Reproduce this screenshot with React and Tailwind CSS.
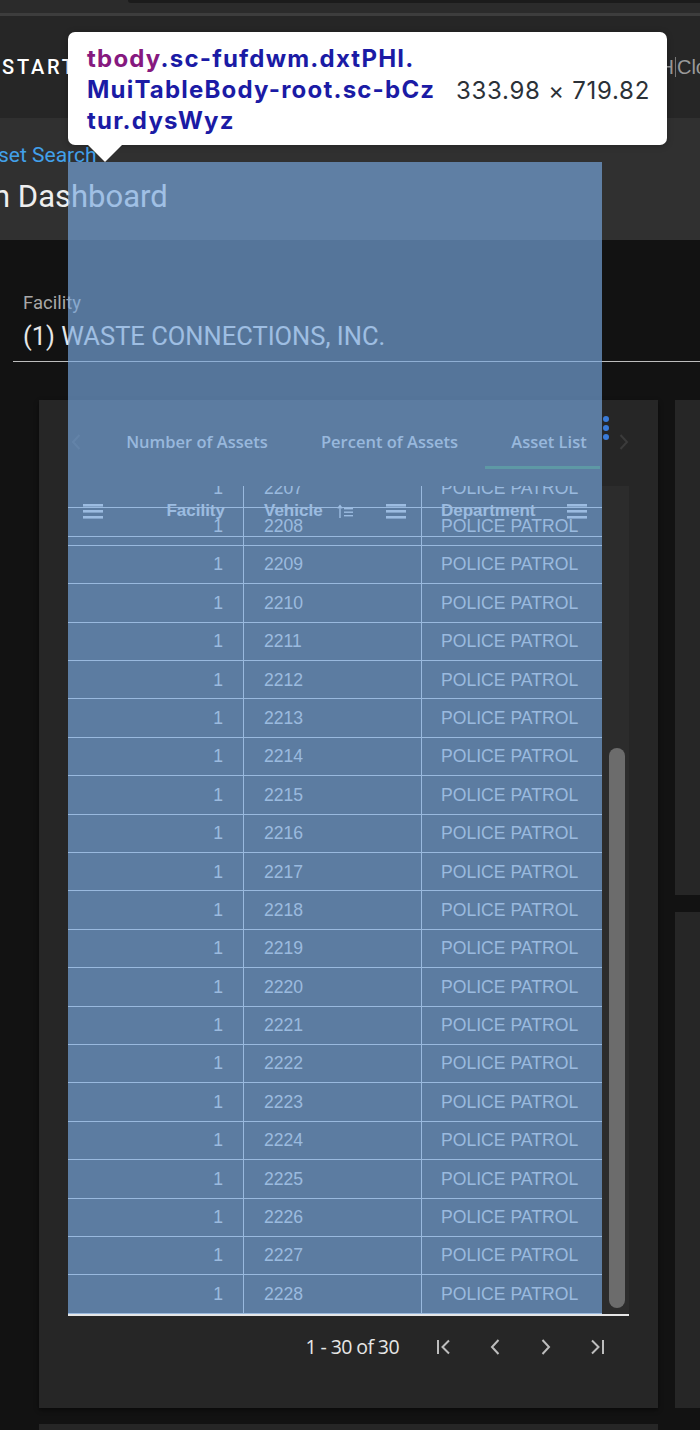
import React from "react";

const MenuIcon = ({ className = "" }) => (
  <svg width="20" height="15" viewBox="0 0 20 15" className={className}>
    <rect x="0" y="0" width="20" height="2.6" fill="#e0e0e0" />
    <rect x="0" y="6" width="20" height="2.6" fill="#e0e0e0" />
    <rect x="0" y="12" width="20" height="2.6" fill="#e0e0e0" />
  </svg>
);

const SortIcon = () => (
  <svg width="17" height="15" viewBox="0 0 17 15">
    <path d="M3 14V2M0.8 4.4L3 1.6L5.2 4.4" stroke="#e0e0e0" strokeWidth="1.4" fill="none" />
    <rect x="7" y="4" width="9" height="1.4" fill="#e0e0e0" />
    <rect x="7" y="7.5" width="9" height="1.4" fill="#e0e0e0" />
    <rect x="7" y="11" width="9" height="1.4" fill="#e0e0e0" />
  </svg>
);

const Chevron = ({ dir = "left", color = "#bdbdbd", w = 12, h = 18, sw = 2 }) => (
  <svg width={w} height={h} viewBox="0 0 12 18">
    {dir === "left" ? (
      <path d="M9.5 2L3 9l6.5 7" stroke={color} strokeWidth={sw} fill="none" />
    ) : (
      <path d="M2.5 2L9 9l-6.5 7" stroke={color} strokeWidth={sw} fill="none" />
    )}
  </svg>
);

const FirstPage = () => (
  <svg width="18" height="18" viewBox="0 0 18 18">
    <path d="M3 2v14" stroke="#bdbdbd" strokeWidth="2" />
    <path d="M14 2.5L7.5 9l6.5 6.5" stroke="#bdbdbd" strokeWidth="2" fill="none" />
  </svg>
);

const LastPage = () => (
  <svg width="18" height="18" viewBox="0 0 18 18">
    <path d="M15 2v14" stroke="#bdbdbd" strokeWidth="2" />
    <path d="M4 2.5L10.5 9 4 15.5" stroke="#bdbdbd" strokeWidth="2" fill="none" />
  </svg>
);

const rows = Array.from({ length: 30 }, (_, i) => 2199 + i);

export default function App() {
  return (
    <div className="relative w-[700px] h-[1430px] overflow-hidden bg-[#121212] font-['Roboto',sans-serif]">
      {/* top browser strip */}
      <div className="h-[13px] bg-[#2b2b2b]">
        <div className="ml-[128px] h-[3px] bg-[#1b1b1b] rounded-bl-[10px]" />
      </div>
      <div className="h-[3px] bg-[#3d3d3d]" />

      {/* app bar */}
      <div className="h-[102px] bg-[#262626] flex items-center justify-between">
        <div className="text-[20px] tracking-[0.14em] text-white font-medium pl-[2px]">START</div>
        <div className="flex items-center text-[20px] text-[#9a9a9a] font-['Liberation_Sans',sans-serif] -mr-[7px]">
          <span>H</span>
          <span className="w-[1px] h-[20px] bg-[#777] mx-[1px]" />
          <span>Clo</span>
        </div>
      </div>

      {/* header band */}
      <div className="h-[122px] bg-[#303030] pt-[23px]">
        <div className="text-[21px] leading-[28px] text-[#42a0ea] -ml-[2px]">set Search</div>
        <div className="text-[31px] leading-[40px] text-[#eeeeee] mt-[8px] -ml-[7px]">n Dashboard</div>
      </div>

      {/* main */}
      <div className="pt-[52px]">
        <div className="ml-[13px] border-b border-[#bdbdbd] pb-[10px]">
          <div className="pl-[10px] text-[18.5px] leading-[22px] text-[#a8a8a8]">Facility</div>
          <div className="pl-[10px] mt-[7px] text-[25.5px] leading-[30px] text-[#e6e6e6]">(1) WASTE CONNECTIONS, INC.</div>
        </div>

        <div className="mt-[38px] flex gap-[17px]">
          {/* main card */}
          <div className="ml-[39px] w-[619px] h-[1008px] shrink-0 bg-[#262626] shadow-[0_2px_4px_rgba(0,0,0,0.5)]">
            {/* tabs */}
            <div className="ml-[29px] h-[70px] flex">
              <div className="w-[32px] flex items-center pt-[14px] pl-[2px]">
                <Chevron dir="left" color="#3d3d3d" w={12} h={20} />
              </div>
              <div className="w-[500px] overflow-hidden flex font-['Open_Sans',sans-serif] font-semibold text-[16.5px] text-[#d6d6d6]">
                <div className="w-[194px] shrink-0 flex items-center justify-center pt-[14px]">Number of Assets</div>
                <div className="w-[191px] shrink-0 flex items-center justify-center pt-[14px]">Percent of Assets</div>
                <div className="relative w-[128px] shrink-0 flex items-center justify-center pt-[14px]">
                  Asset List
                  <div className="absolute left-0 right-0 bottom-[1px] h-[3px] bg-[#2e7d32]" />
                </div>
              </div>
              <div className="w-[10px] flex flex-col items-center pt-[16px] gap-[3px] pl-[2px]">
                <div className="w-[6px] h-[6px] rounded-full bg-[#3a7bd8]" />
                <div className="w-[6px] h-[6px] rounded-full bg-[#3a7bd8]" />
                <div className="w-[6px] h-[6px] rounded-full bg-[#3a7bd8]" />
              </div>
              <div className="w-[24px] flex items-center pt-[14px] pl-[8px]">
                <Chevron dir="right" color="#3b3b3b" w={12} h={20} />
              </div>
            </div>

            {/* table */}
            <div className="mt-[16px] ml-[29px] w-[561px] h-[828px] flex relative overflow-hidden font-['Liberation_Sans',Arial,sans-serif]">
              <div className="w-[534px] h-full overflow-hidden relative">
                <div className="-mt-[324px]">
                  {rows.map((v) => (
                    <div key={v} className="h-[38.4px] grid grid-cols-[176px_178px_180px] border-b border-[#d8d8d8] text-[17.6px] text-[#dcdcdc]">
                      <div className="border-r border-[#d8d8d8] flex items-center justify-end pr-[20px]">1</div>
                      <div className="border-r border-[#d8d8d8] flex items-center pl-[20px]">{v}</div>
                      <div className="flex items-center pl-[19px]">POLICE PATROL</div>
                    </div>
                  ))}
                </div>
                {/* sticky transparent header */}
                <div className="absolute top-0 left-0 w-[534px] h-[51px] grid grid-cols-[176px_178px_180px] border-b border-[#d8d8d8] font-bold text-[17px] text-[#e0e0e0]">
                  <div className="flex items-center justify-between pl-[15px] pr-[19px]">
                    <MenuIcon />
                    <span>Facility</span>
                  </div>
                  <div className="flex items-center pl-[20px] pr-[16px]">
                    <span>Vehicle</span>
                    <span className="ml-[14px]"><SortIcon /></span>
                    <span className="ml-auto"><MenuIcon /></span>
                  </div>
                  <div className="flex items-center pl-[19px] pr-[15px]">
                    <span>Department</span>
                    <span className="ml-auto"><MenuIcon /></span>
                  </div>
                </div>
              </div>
              <div className="w-[27px] h-full bg-[#2c2c2c] pl-[7px] pt-[262px]">
                <div className="w-[16px] h-[560px] rounded-full bg-[#6c6c6c]" />
              </div>
            </div>
            <div className="ml-[29px] w-[561px] h-[1.5px] bg-[#e6e6e6]" />

            {/* pagination */}
            <div className="ml-[29px] w-[561px] h-[66px] flex items-center justify-end pr-[7px] pb-[4px] font-['Open_Sans',sans-serif]">
              <span className="text-[19.5px] text-[#e6e6e6] tracking-[-0.03em] mr-[19px]">1 - 30 of 30</span>
              <div className="w-[51px] flex justify-center"><FirstPage /></div>
              <div className="w-[51px] flex justify-center"><Chevron dir="left" w={12} h={18} /></div>
              <div className="w-[51px] flex justify-center"><Chevron dir="right" w={12} h={18} /></div>
              <div className="w-[51px] flex justify-center"><LastPage /></div>
            </div>
          </div>

          {/* right column cards */}
          <div className="flex flex-col gap-[17px]">
            <div className="w-[300px] h-[495px] bg-[#262626]" />
            <div className="w-[300px] h-[496px] bg-[#262626]" />
          </div>
        </div>

        <div className="mt-[16px] ml-[39px] w-[619px] h-[300px] bg-[#262626]" />
      </div>

      {/* inspector highlight overlay */}
      <div className="absolute left-[68px] top-[162px] w-[534px] h-[1152px] bg-[rgba(120,168,225,0.66)] pointer-events-none" />

      {/* inspector tooltip */}
      <div className="absolute left-[68px] top-[32px] w-[599px] h-[113px] bg-white rounded-[7px] shadow-[0_1px_6px_rgba(0,0,0,0.25)] flex items-center justify-between pl-[19px] pr-[17px] font-['Inter',sans-serif]">
        <div className="text-[24px] leading-[31px] font-bold text-[#1b1ba5] tracking-[0.05em] pt-[2px]">
          <div><span className="text-[#86197f]">tbody</span>.sc-fufdwm.dxtPHI.</div>
          <div>MuiTableBody-root.sc-bCz</div>
          <div>tur.dysWyz</div>
        </div>
        <div className="text-[24px] text-[#2b3137] tracking-[0.03em] pt-[4px]">333.98 × 719.82</div>
        <div className="absolute left-[20px] top-full w-0 h-0 border-l-[17px] border-r-[17px] border-t-[17px] border-l-transparent border-r-transparent border-t-white" />
      </div>
    </div>
  );
}
